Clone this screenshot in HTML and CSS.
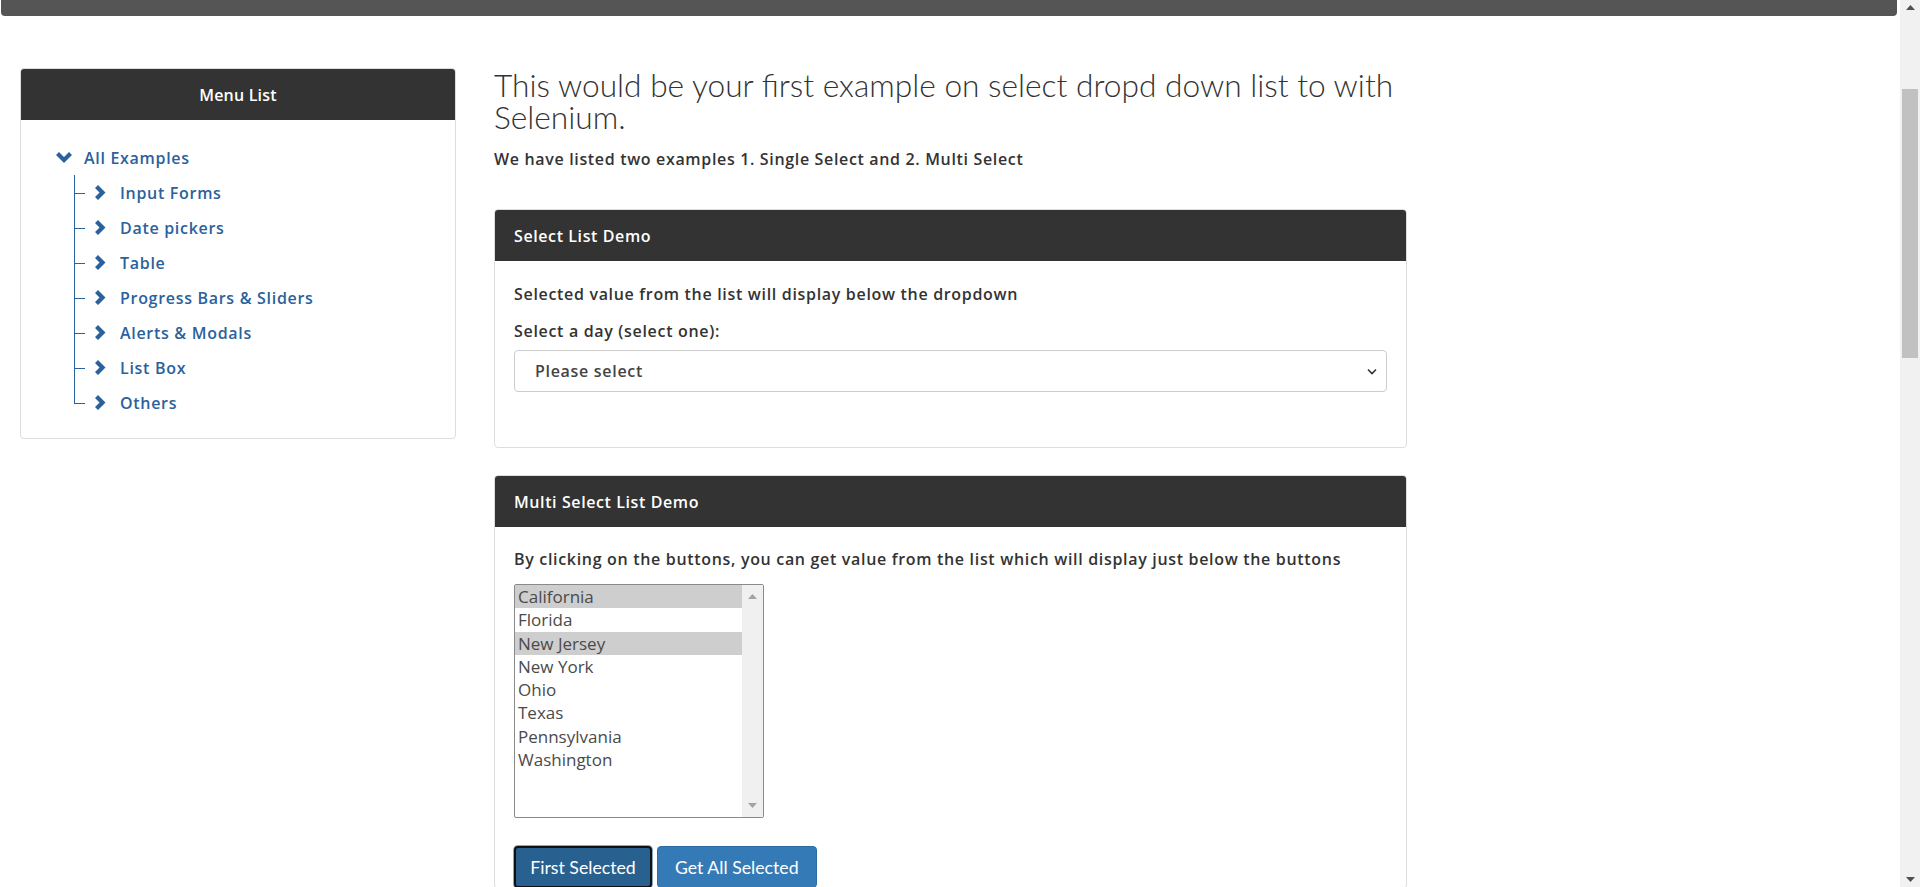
FILE: index.html
```html
<!DOCTYPE html>
<html lang="en">
<head>
<meta charset="utf-8">
<title>Select Dropdown List Demo</title>
<link rel="stylesheet" href="styles.css">
</head>
<body>
<div class="page">
  <div class="viewport">
    <div class="topbar"></div>
    <div class="layout">
      <aside class="menu">
        <div class="menu-head">Menu List</div>
        <div class="menu-body">
          <div class="tree-root">
            <svg class="chev-down" width="16" height="11" viewBox="0 0 16 11"><polygon points="0,3 3,0 8,5 13,0 16,3 8,11" fill="#2b619c"/></svg>
            <a class="tree-link">All Examples</a>
          </div>
          <ul class="tree">
            <li><svg class="chev-right" width="11" height="15" viewBox="0 0 11 15"><polygon points="0,3 3,0 10.5,7.5 3,15 0,12 4.5,7.5" fill="#2b619c"/></svg><a class="tree-link">Input Forms</a></li>
            <li><svg class="chev-right" width="11" height="15" viewBox="0 0 11 15"><polygon points="0,3 3,0 10.5,7.5 3,15 0,12 4.5,7.5" fill="#2b619c"/></svg><a class="tree-link">Date pickers</a></li>
            <li><svg class="chev-right" width="11" height="15" viewBox="0 0 11 15"><polygon points="0,3 3,0 10.5,7.5 3,15 0,12 4.5,7.5" fill="#2b619c"/></svg><a class="tree-link">Table</a></li>
            <li><svg class="chev-right" width="11" height="15" viewBox="0 0 11 15"><polygon points="0,3 3,0 10.5,7.5 3,15 0,12 4.5,7.5" fill="#2b619c"/></svg><a class="tree-link">Progress Bars &amp; Sliders</a></li>
            <li><svg class="chev-right" width="11" height="15" viewBox="0 0 11 15"><polygon points="0,3 3,0 10.5,7.5 3,15 0,12 4.5,7.5" fill="#2b619c"/></svg><a class="tree-link">Alerts &amp; Modals</a></li>
            <li><svg class="chev-right" width="11" height="15" viewBox="0 0 11 15"><polygon points="0,3 3,0 10.5,7.5 3,15 0,12 4.5,7.5" fill="#2b619c"/></svg><a class="tree-link">List Box</a></li>
            <li><svg class="chev-right" width="11" height="15" viewBox="0 0 11 15"><polygon points="0,3 3,0 10.5,7.5 3,15 0,12 4.5,7.5" fill="#2b619c"/></svg><a class="tree-link">Others</a></li>
          </ul>
        </div>
      </aside>
      <main class="main">
        <h3 class="title">This would be your first example on select dropd down list to with Selenium.</h3>
        <p class="intro">We have listed two examples 1. Single Select and 2. Multi Select</p>

        <section class="panel panel-single">
          <div class="panel-head">Select List Demo</div>
          <div class="panel-body">
            <p class="desc">Selected value from the list will display below the dropdown</p>
            <p class="label">Select a day (select one):</p>
            <div class="select">
              <span>Please select</span>
              <svg width="10" height="7" viewBox="0 0 10 7"><polyline points="1,1.5 5,5.5 9,1.5" fill="none" stroke="#333" stroke-width="1.6"/></svg>
            </div>
          </div>
        </section>

        <section class="panel panel-multi">
          <div class="panel-head">Multi Select List Demo</div>
          <div class="panel-body">
            <p class="desc">By clicking on the buttons, you can get value from the list which will display just below the buttons</p>
            <div class="listbox">
              <div class="options">
                <div class="opt sel">California</div>
                <div class="opt">Florida</div>
                <div class="opt sel">New Jersey</div>
                <div class="opt">New York</div>
                <div class="opt">Ohio</div>
                <div class="opt">Texas</div>
                <div class="opt">Pennsylvania</div>
                <div class="opt">Washington</div>
              </div>
              <div class="lb-scroll">
                <svg width="9" height="5" viewBox="0 0 9 5"><polygon points="0,5 4.5,0 9,5" fill="#a3a3a3"/></svg>
                <svg width="9" height="5" viewBox="0 0 9 5"><polygon points="0,0 9,0 4.5,5" fill="#a3a3a3"/></svg>
              </div>
            </div>
            <div class="buttons">
              <button class="btn btn-focus">First Selected</button>
              <button class="btn">Get All Selected</button>
            </div>
          </div>
        </section>
      </main>
    </div>
  </div>
  <div class="scrollbar">
    <svg class="arrow" width="9" height="5" viewBox="0 0 9 5"><polygon points="0,5 4.5,0 9,5" fill="#505050"/></svg>
    <div class="track"><div class="thumb"></div></div>
    <svg class="arrow" width="9" height="5" viewBox="0 0 9 5"><polygon points="0,0 9,0 4.5,5" fill="#505050"/></svg>
  </div>
</div>
</body>
</html>
```

FILE: styles.css
```css
* { box-sizing: border-box; }
html, body { margin: 0; padding: 0; height: 887px; overflow: hidden; background: #fff; }
body { font-family: "Open Sans", "Lato", sans-serif; color: #333; }

.page { display: flex; height: 887px; }
.viewport { flex: 1; overflow: hidden; }

.topbar {
  height: 16px;
  margin: 0 3px 0 1px;
  background: #555;
  border-radius: 0 0 4px 4px;
}

.layout {
  display: flex;
  align-items: flex-start;
  gap: 38px;
  padding: 52px 0 0 20px;
}

/* Menu */
.menu {
  width: 436px;
  border: 1px solid #ddd;
  border-radius: 4px;
  overflow: hidden;
}
.menu-head {
  height: 51px;
  background: #333;
  color: #fff;
  font-weight: 600;
  font-size: 16px;
  letter-spacing: 0.2px;
  display: flex;
  align-items: center;
  justify-content: center;
}
.menu-body { padding: 20px 0 18px 0; }
.tree-root {
  height: 35px;
  display: flex;
  align-items: center;
  padding-left: 35px;
}
.chev-down { margin-right: 12px; }
.tree-link {
  color: #2b619c;
  font-size: 16px;
  font-weight: 600;
  letter-spacing: 0.7px;
  text-decoration: none;
}
.tree {
  list-style: none;
  margin: 0 0 0 53px;
  padding: 0;
}
.tree li {
  position: relative;
  height: 35px;
  display: flex;
  align-items: center;
  padding-left: 21px;
}
.tree li::before {
  content: "";
  position: absolute;
  left: 0; top: 0; bottom: 0;
  border-left: 1px solid #2b619c;
}
.tree li:last-child::before { bottom: 50%; }
.tree li::after {
  content: "";
  position: absolute;
  left: 0; top: 50%;
  width: 11px;
  border-top: 1px solid #2b619c;
}
.chev-right { margin-right: 14px; }

/* Main */
.main { width: 913px; }
.title {
  margin: 1px 0 0 0;
  font-family: "Lato", sans-serif;
  font-size: 31.7px;
  font-weight: 300;
  line-height: 32px;
  color: #333;
}
.intro {
  margin: 16px 0 0 0;
  font-size: 16px;
  font-weight: 600;
  letter-spacing: 0.66px;
  line-height: 20px;
}

.panel {
  border: 1px solid #ddd;
  border-radius: 4px;
  overflow: hidden;
}
.panel-single { margin-top: 40px; height: 239px; }
.panel-multi { margin-top: 27px; }
.panel-head {
  height: 51px;
  background: #333;
  color: #fff;
  font-weight: 600;
  font-size: 16px;
  letter-spacing: 0.6px;
  display: flex;
  align-items: center;
  padding-left: 19px;
}
.panel-body { padding: 23px 19px 0 19px; }
.desc {
  margin: 0;
  font-size: 16px;
  font-weight: 600;
  letter-spacing: 0.68px;
  line-height: 20px;
}
.label {
  margin: 17px 0 0 0;
  font-size: 16px;
  font-weight: 600;
  letter-spacing: 0.68px;
  line-height: 20px;
}
.select {
  margin-top: 9px;
  height: 42px;
  border: 1px solid #ccc;
  border-radius: 4px;
  display: flex;
  align-items: center;
  justify-content: space-between;
  padding: 0 9px 0 20px;
  font-size: 16px;
  font-weight: 600;
  letter-spacing: 0.7px;
  color: #444;
}

.panel-multi .panel-body { padding-top: 22px; }
.listbox {
  margin-top: 15px;
  width: 250px;
  height: 234px;
  border: 1px solid #8a8a8a;
  border-radius: 2px;
  display: flex;
}
.options { flex: 1; }
.opt {
  height: 23.3px;
  line-height: 23px;
  padding-left: 3px;
  font-size: 17px;
  color: #4a4a4a;
}
.opt.sel { background: #cecece; }
.lb-scroll {
  width: 21px;
  background: #f0f0f0;
  display: flex;
  flex-direction: column;
  justify-content: space-between;
  align-items: center;
  padding: 9px 0 9px 0;
}

.buttons {
  margin-top: 28px;
  display: flex;
  gap: 5px;
}
.btn {
  height: 42px;
  padding: 0 17px;
  border: 1px solid #2e6da4;
  border-radius: 4px;
  background: #337ab7;
  color: #fff;
  font-family: "Lato", sans-serif;
  font-size: 17.7px;
}
.btn-focus {
  background: #286090;
  border: 2px solid #111;
  box-shadow: 0 0 0 1px #8aa5c4;
  width: 138px;
  padding: 0;
}

/* Page scrollbar */
.scrollbar {
  width: 20px;
  background: #f1f1f1;
  display: flex;
  flex-direction: column;
  align-items: center;
}
.scrollbar .arrow { margin: 5px 0; flex: none; }
.track { flex: 1; width: 100%; padding: 0 2px; }
.thumb {
  margin-top: 74px;
  height: 269px;
  background: #c1c1c1;
}
```
